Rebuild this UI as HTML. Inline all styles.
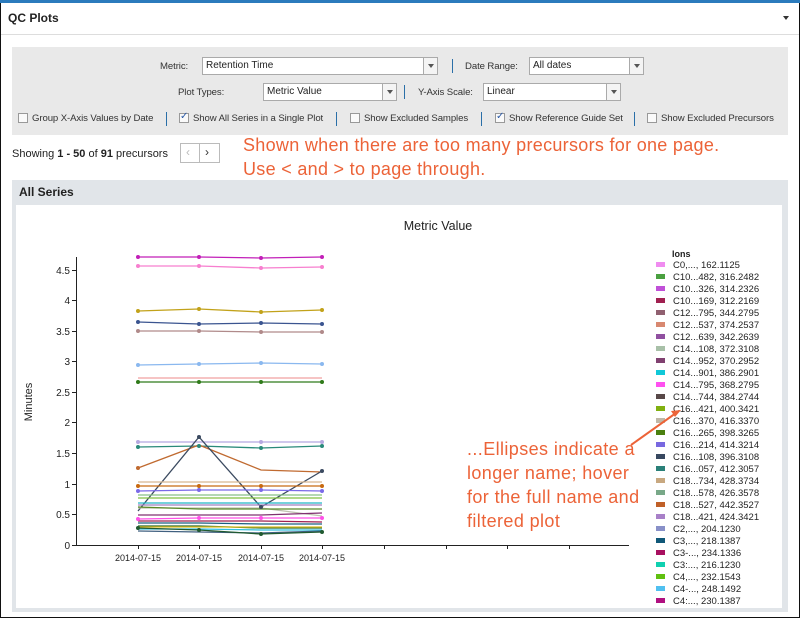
<!DOCTYPE html>
<html><head><meta charset="utf-8"><style>
*{margin:0;padding:0;box-sizing:border-box}
body{width:800px;height:618px;overflow:hidden;background:#fff;font-family:"Liberation Sans",sans-serif;font-size:11px;color:#222;position:relative}
.abs{position:absolute}
.sel{position:absolute;height:18px;border:1px solid #aaa;background:#fff;font-size:10px;padding:2px 3px}
.sel:after{content:"";position:absolute;right:0;top:0;width:13px;height:16px;border-left:1px solid #aaa;background:#f4f4f4}
.sel i{position:absolute;right:3px;top:6px;width:0;height:0;border-left:3px solid transparent;border-right:3px solid transparent;border-top:4px solid #555;z-index:2}
.lab{position:absolute;font-size:9.6px;color:#333;letter-spacing:-0.1px}
.bar{position:absolute;width:1px;height:14px;background:#2a6fa8}
.cb{position:absolute;width:10px;height:10px;border:1px solid #999;background:#fafafa}
.cb.on:after{content:"✓";position:absolute;left:0px;top:-3px;font-size:10px;color:#2a5aa8}
.ann{position:absolute;color:#ec6338;font-size:18px;line-height:24px}
</style></head><body>
<div class="abs" style="left:0;top:0;width:800px;height:618px;border:1px solid #111"></div>
<div class="abs" style="left:0;top:0;width:800px;height:3px;background:#2b7bbd"></div>
<div class="abs" style="left:8px;top:11px;font-size:12px;font-weight:bold;color:#222">QC Plots</div>
<div class="abs" style="left:783px;top:16px;border-left:3px solid transparent;border-right:3px solid transparent;border-top:4px solid #333"></div>
<div class="abs" style="left:1px;top:34px;width:798px;height:1px;background:#ddd"></div>

<div class="abs" style="left:12px;top:47px;width:776px;height:88px;background:#e9e9e9"></div>
<div class="lab" style="left:160px;top:61px">Metric:</div>
<div class="sel" style="left:202px;top:57px;width:236px">Retention Time<i></i></div>
<div class="bar" style="left:452px;top:59px"></div>
<div class="lab" style="left:465px;top:61px">Date Range:</div>
<div class="sel" style="left:529px;top:57px;width:115px">All dates<i></i></div>
<div class="lab" style="left:178px;top:87px">Plot Types:</div>
<div class="sel" style="left:263px;top:83px;width:134px">Metric Value<i></i></div>
<div class="bar" style="left:404px;top:85px"></div>
<div class="lab" style="left:418px;top:87px">Y-Axis Scale:</div>
<div class="sel" style="left:483px;top:83px;width:138px">Linear<i></i></div>
<div class="cb" style="left:18px;top:113px"></div><div class="lab" style="left:32px;top:113px">Group X-Axis Values by Date</div>
<div class="bar" style="left:166px;top:112px"></div>
<div class="cb on" style="left:179px;top:113px"></div><div class="lab" style="left:193px;top:113px">Show All Series in a Single Plot</div>
<div class="bar" style="left:336px;top:112px"></div>
<div class="cb" style="left:350px;top:113px"></div><div class="lab" style="left:364px;top:113px">Show Excluded Samples</div>
<div class="bar" style="left:481px;top:112px"></div>
<div class="cb on" style="left:495px;top:113px"></div><div class="lab" style="left:509px;top:113px">Show Reference Guide Set</div>
<div class="bar" style="left:634px;top:112px"></div>
<div class="cb" style="left:647px;top:113px"></div><div class="lab" style="left:661px;top:113px">Show Excluded Precursors</div>

<div class="abs" style="left:12px;top:148px;font-size:11px">Showing <b>1 - 50</b> of <b>91</b> precursors</div>
<div class="abs" style="left:180px;top:143px;width:40px;height:20px;border:1px solid #bbb;background:#fff"></div>
<div class="abs" style="left:199px;top:143px;width:1px;height:20px;background:#bbb"></div>
<div class="abs" style="left:186px;top:145px;color:#bbb;font-size:12px">‹</div>
<div class="abs" style="left:205px;top:145px;color:#333;font-size:12px">›</div>
<div class="ann" style="left:243px;top:133px;letter-spacing:0.3px">Shown when there are too many precursors for one page.<br>Use &lt; and &gt; to page through.</div>

<div class="abs" style="left:12px;top:180px;width:776px;height:432px;background:#e1e5e9"></div>
<div class="abs" style="left:19px;top:185px;font-size:12px;font-weight:bold">All Series</div>
<div class="abs" style="left:16px;top:205px;width:766px;height:403px;background:#fff"></div>

<svg class="abs" style="left:0;top:0" width="800" height="618" font-family="Liberation Sans, sans-serif">
<text x="438" y="230" font-size="12.5" text-anchor="middle" fill="#222">Metric Value</text>
<text transform="translate(32,402) rotate(-90)" font-size="11" text-anchor="middle" fill="#222">Minutes</text>
<g stroke="#222" fill="none"><path d="M76.5 257V545.5H629"/>
<path d="M72 545.5h4M72 514.5h4M72 484.5h4M72 453.5h4M72 422.5h4M72 392.5h4M72 361.5h4M72 331.5h4M72 300.5h4M72 270.5h4"/>
<path d="M138.5 545v4M199.5 545v4M261.5 545v4M322.5 545v4M384.5 545v4M446.5 545v4M507.5 545v4M569.5 545v4"/></g>
<g font-size="10" fill="#222" text-anchor="end"><text x="70" y="549">0</text><text x="70" y="518">0.5</text><text x="70" y="488">1</text><text x="70" y="457">1.5</text><text x="70" y="426">2</text><text x="70" y="396">2.5</text><text x="70" y="365">3</text><text x="70" y="335">3.5</text><text x="70" y="304">4</text><text x="70" y="274">4.5</text></g>
<g font-size="9" fill="#222" text-anchor="middle"><text x="138" y="561">2014-07-15</text><text x="199" y="561">2014-07-15</text><text x="261" y="561">2014-07-15</text><text x="322" y="561">2014-07-15</text></g>
<g fill="none" stroke-width="1.3">
<polyline stroke="#c21fb8" points="138,257 199,257 261,258 322,257"/>
<polyline stroke="#f77fcf" points="138,266 199,266 261,268 322,267"/>
<polyline stroke="#c2a21a" points="138,311 199,309 261,312 322,310"/>
<polyline stroke="#3b5590" points="138,322 199,324 261,323 322,324"/>
<polyline stroke="#b08a8a" points="138,331 199,331 261,332 322,332"/>
<polyline stroke="#8ab8ef" points="138,365 199,364 261,363 322,364"/>
<polyline stroke="#f0a0a0" points="138,378 199,378 261,378 322,378"/>
<polyline stroke="#2f7a1a" points="138,382 199,382 261,382 322,382"/>
<polyline stroke="#b5a8e0" points="138,442 199,442 261,442 322,442"/>
<polyline stroke="#2a8a7a" points="138,447 199,446 261,448 322,446"/>
<polyline stroke="#c06a30" points="138,468 199,445 261,470 322,472"/>
<polyline stroke="#3b4a60" points="138,511 199,437 261,507 322,471"/>
<polyline stroke="#d8b890" points="138,482 199,482 261,482 322,482"/>
<polyline stroke="#c86a10" points="138,486 199,486 261,486 322,486"/>
<polyline stroke="#7a6ae8" points="138,491 199,490 261,490 322,491"/>
<polyline stroke="#88c088" points="138,495 199,495 261,495 322,495"/>
<polyline stroke="#80c040" points="138,498 199,498 261,498 322,498"/>
<polyline stroke="#20b8c8" points="138,503 199,503 261,503 322,503"/>
<polyline stroke="#a080c0" points="138,505 199,505 261,505 322,505"/>
<polyline stroke="#c0c0b0" points="138,508 199,508 261,508 322,516"/>
<polyline stroke="#5a8a2a" points="138,507 199,509 261,509 322,509"/>
<polyline stroke="#803070" points="138,515 199,515 261,515 322,513"/>
<polyline stroke="#ff50e8" points="138,519 199,518 261,518 322,518"/>
<polyline stroke="#a02050" points="138,521 199,521 261,521 322,522"/>
<polyline stroke="#1a6080" points="138,523 199,523 261,524 322,524"/>
<polyline stroke="#2a6a2a" points="138,526 199,526 261,528 322,528"/>
<polyline stroke="#e0c020" points="138,527 199,527 261,527 322,527"/>
<polyline stroke="#30c0e0" points="138,529 199,529 261,530 322,530"/>
<polyline stroke="#406080" points="138,531 199,532 261,533 322,531"/>
<polyline stroke="#205a30" points="138,528 199,530 261,534 322,532"/>
</g>
<g fill="#555">
<circle cx="138" cy="257" r="2" fill="#c21fb8"/><circle cx="199" cy="257" r="2" fill="#c21fb8"/><circle cx="261" cy="258" r="2" fill="#c21fb8"/><circle cx="322" cy="257" r="2" fill="#c21fb8"/>
<circle cx="138" cy="266" r="2" fill="#f77fcf"/><circle cx="199" cy="266" r="2" fill="#f77fcf"/><circle cx="261" cy="268" r="2" fill="#f77fcf"/><circle cx="322" cy="267" r="2" fill="#f77fcf"/>
<circle cx="138" cy="311" r="2" fill="#c2a21a"/><circle cx="199" cy="309" r="2" fill="#c2a21a"/><circle cx="261" cy="312" r="2" fill="#c2a21a"/><circle cx="322" cy="310" r="2" fill="#c2a21a"/>
<circle cx="138" cy="322" r="2" fill="#3b5590"/><circle cx="199" cy="324" r="2" fill="#3b5590"/><circle cx="261" cy="323" r="2" fill="#3b5590"/><circle cx="322" cy="324" r="2" fill="#3b5590"/>
<circle cx="138" cy="331" r="2" fill="#b08a8a"/><circle cx="199" cy="331" r="2" fill="#b08a8a"/><circle cx="261" cy="332" r="2" fill="#b08a8a"/><circle cx="322" cy="332" r="2" fill="#b08a8a"/>
<circle cx="138" cy="365" r="2" fill="#8ab8ef"/><circle cx="199" cy="364" r="2" fill="#8ab8ef"/><circle cx="261" cy="363" r="2" fill="#8ab8ef"/><circle cx="322" cy="364" r="2" fill="#8ab8ef"/>
<circle cx="138" cy="468" r="2" fill="#c06a30"/><circle cx="199" cy="437" r="2" fill="#3b4a60"/><circle cx="261" cy="507" r="2" fill="#3b4a60"/><circle cx="322" cy="471" r="2" fill="#3b4a60"/>
<circle cx="138" cy="382" r="2" fill="#2f7a1a"/><circle cx="199" cy="382" r="2" fill="#2f7a1a"/><circle cx="261" cy="382" r="2" fill="#2f7a1a"/><circle cx="322" cy="382" r="2" fill="#2f7a1a"/>
<circle cx="138" cy="447" r="2" fill="#2a8a7a"/><circle cx="199" cy="446" r="2" fill="#2a8a7a"/><circle cx="261" cy="448" r="2" fill="#2a8a7a"/><circle cx="322" cy="446" r="2" fill="#2a8a7a"/>
<circle cx="138" cy="442" r="2" fill="#b5a8e0"/><circle cx="261" cy="442" r="2" fill="#b5a8e0"/><circle cx="322" cy="442" r="2" fill="#b5a8e0"/>
<circle cx="138" cy="486" r="2" fill="#c86a10"/><circle cx="199" cy="486" r="2" fill="#c86a10"/><circle cx="261" cy="486" r="2" fill="#c86a10"/><circle cx="322" cy="486" r="2" fill="#c86a10"/>
<circle cx="138" cy="491" r="2" fill="#7a6ae8"/><circle cx="199" cy="490" r="2" fill="#7a6ae8"/><circle cx="261" cy="490" r="2" fill="#7a6ae8"/><circle cx="322" cy="491" r="2" fill="#7a6ae8"/>
<circle cx="138" cy="519" r="2" fill="#ff50e8"/><circle cx="199" cy="518" r="2" fill="#ff50e8"/><circle cx="261" cy="518" r="2" fill="#ff50e8"/><circle cx="322" cy="518" r="2" fill="#ff50e8"/>
<circle cx="138" cy="528" r="2" fill="#205a30"/><circle cx="199" cy="530" r="2" fill="#205a30"/><circle cx="261" cy="534" r="2" fill="#205a30"/><circle cx="322" cy="532" r="2" fill="#205a30"/>
</g>
<text x="672" y="257" font-size="9" font-weight="bold" fill="#222">Ions</text>
<g font-size="9.5" fill="#222">
<rect x="656" y="262" width="9" height="5" fill="#f08cf0"/><text x="673" y="268">C0,..., 162.1125</text>
<rect x="656" y="274" width="9" height="5" fill="#4aa040"/><text x="673" y="280">C10...482, 316.2482</text>
<rect x="656" y="286" width="9" height="5" fill="#c050d8"/><text x="673" y="292">C10...326, 314.2326</text>
<rect x="656" y="298" width="9" height="5" fill="#a02050"/><text x="673" y="304">C10...169, 312.2169</text>
<rect x="656" y="310" width="9" height="5" fill="#906070"/><text x="673" y="316">C12...795, 344.2795</text>
<rect x="656" y="322" width="9" height="5" fill="#d88870"/><text x="673" y="328">C12...537, 374.2537</text>
<rect x="656" y="334" width="9" height="5" fill="#9050a0"/><text x="673" y="340">C12...639, 342.2639</text>
<rect x="656" y="346" width="9" height="5" fill="#a8c0a8"/><text x="673" y="352">C14...108, 372.3108</text>
<rect x="656" y="358" width="9" height="5" fill="#804070"/><text x="673" y="364">C14...952, 370.2952</text>
<rect x="656" y="370" width="9" height="5" fill="#10c8d8"/><text x="673" y="376">C14...901, 386.2901</text>
<rect x="656" y="382" width="9" height="5" fill="#ff50f0"/><text x="673" y="388">C14...795, 368.2795</text>
<rect x="656" y="394" width="9" height="5" fill="#584848"/><text x="673" y="400">C14...744, 384.2744</text>
<rect x="656" y="406" width="9" height="5" fill="#80b010"/><text x="673" y="412">C16...421, 400.3421</text>
<rect x="656" y="418" width="9" height="5" fill="#c0b8a8"/><text x="673" y="424">C16...370, 416.3370</text>
<rect x="656" y="430" width="9" height="5" fill="#4a8010"/><text x="673" y="436">C16...265, 398.3265</text>
<rect x="656" y="442" width="9" height="5" fill="#7868e0"/><text x="673" y="448">C16...214, 414.3214</text>
<rect x="656" y="454" width="9" height="5" fill="#384860"/><text x="673" y="460">C16...108, 396.3108</text>
<rect x="656" y="466" width="9" height="5" fill="#2a8078"/><text x="673" y="472">C16...057, 412.3057</text>
<rect x="656" y="478" width="9" height="5" fill="#c8a880"/><text x="673" y="484">C18...734, 428.3734</text>
<rect x="656" y="490" width="9" height="5" fill="#78a888"/><text x="673" y="496">C18...578, 426.3578</text>
<rect x="656" y="502" width="9" height="5" fill="#c06028"/><text x="673" y="508">C18...527, 442.3527</text>
<rect x="656" y="514" width="9" height="5" fill="#a880c8"/><text x="673" y="520">C18...421, 424.3421</text>
<rect x="656" y="526" width="9" height="5" fill="#8890c8"/><text x="673" y="532">C2,..., 204.1230</text>
<rect x="656" y="538" width="9" height="5" fill="#105878"/><text x="673" y="544">C3,..., 218.1387</text>
<rect x="656" y="550" width="9" height="5" fill="#a81060"/><text x="673" y="556">C3-..., 234.1336</text>
<rect x="656" y="562" width="9" height="5" fill="#10d0b0"/><text x="673" y="568">C3:..., 216.1230</text>
<rect x="656" y="574" width="9" height="5" fill="#60c010"/><text x="673" y="580">C4,..., 232.1543</text>
<rect x="656" y="586" width="9" height="5" fill="#50c0f0"/><text x="673" y="592">C4-..., 248.1492</text>
<rect x="656" y="598" width="9" height="5" fill="#b01080"/><text x="673" y="604">C4:..., 230.1387</text>
</g>
<path d="M631 445L676 413" stroke="#ec6338" stroke-width="2"/>
<path d="M681 410l-10 1 4 6z" fill="#ec6338"/>
</svg>
<div class="ann" style="left:467px;top:437px;letter-spacing:0.4px">...Ellipses indicate a<br>longer name; hover<br>for the full name and<br>filtered plot</div>
</body></html>
